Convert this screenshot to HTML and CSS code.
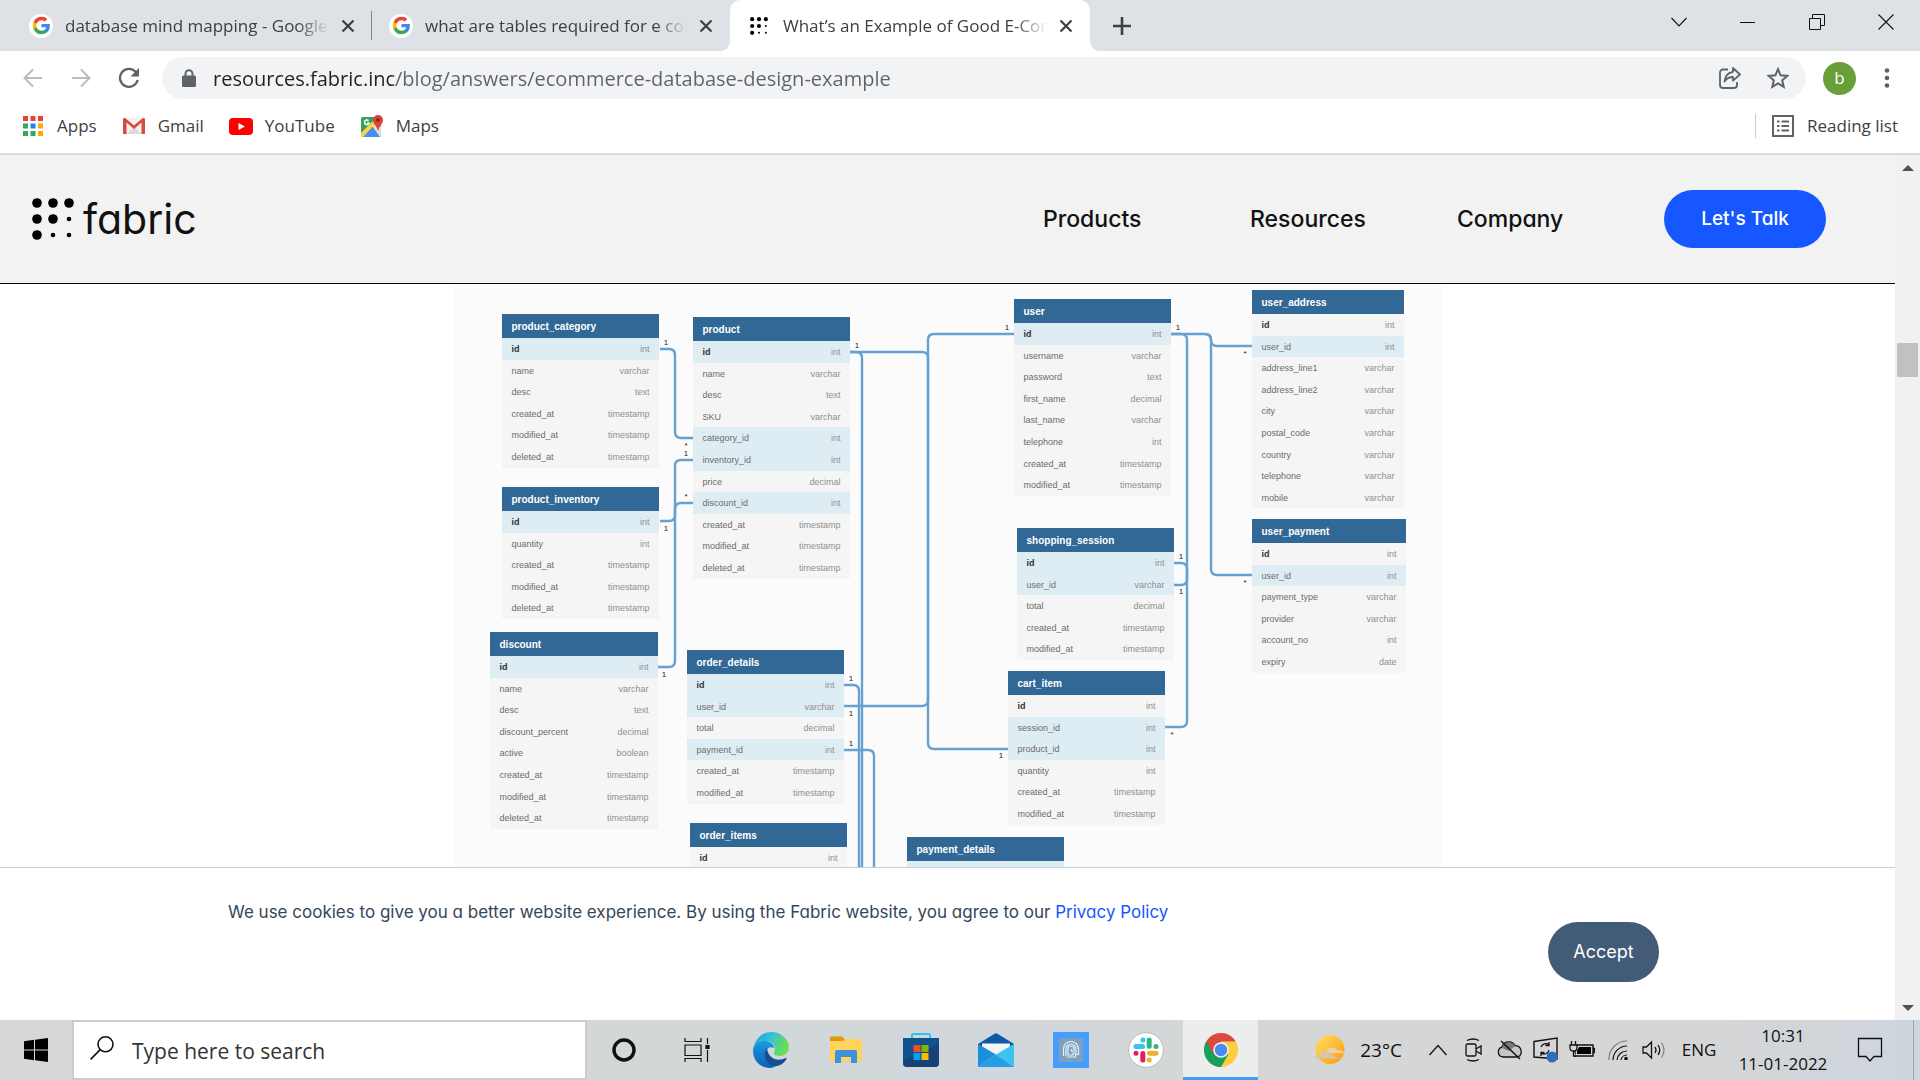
FILE: index.html
```html
<!DOCTYPE html>
<html lang="en">
<head>
<meta charset="utf-8">
<title>What's an Example of Good E-Commerce Database Design?</title>
<link rel="stylesheet" href="styles.css">
</head>
<body>
<svg class="defs" aria-hidden="true">
  <symbol id="google" viewBox="0 0 24 24">
    <path fill="#4285f4" d="M22.56 12.25c0-.78-.07-1.53-.2-2.25H12v4.26h5.92c-.26 1.37-1.04 2.53-2.21 3.31v2.77h3.57c2.08-1.92 3.28-4.74 3.28-8.09z"/>
    <path fill="#34a853" d="M12 23c2.97 0 5.46-.98 7.28-2.66l-3.57-2.77c-.98.66-2.23 1.06-3.71 1.06-2.86 0-5.29-1.93-6.16-4.53H2.18v2.84C3.99 20.53 7.7 23 12 23z"/>
    <path fill="#fbbc05" d="M5.84 14.09c-.22-.66-.35-1.36-.35-2.09s.13-1.43.35-2.09V7.07H2.18C1.43 8.55 1 10.22 1 12s.43 3.45 1.18 4.93l3.66-2.84z"/>
    <path fill="#ea4335" d="M12 5.38c1.62 0 3.06.56 4.21 1.64l3.15-3.15C17.45 2.09 14.97 1 12 1 7.7 1 3.99 3.47 2.18 7.07l3.66 2.84c.87-2.6 3.3-4.53 6.16-4.53z"/>
  </symbol>
  <symbol id="dots" viewBox="0 0 42 42">
    <circle cx="5" cy="5" r="4.8"/><circle cx="21" cy="5" r="4.8"/><circle cx="37" cy="5" r="4.8"/>
    <circle cx="5" cy="21" r="4.8"/><circle cx="21" cy="21" r="4.8"/><circle cx="37" cy="21" r="2.3"/>
    <circle cx="5" cy="37" r="4.8"/><circle cx="21" cy="37" r="2.3"/><circle cx="37" cy="37" r="2.3"/>
  </symbol>
  <symbol id="close" viewBox="0 0 14 14"><path d="M1.5 1.5l11 11M12.500 1.500l-11 11" fill="none" stroke="#3c4043" stroke-width="2.200"/></symbol>
</svg>

<header class="browser">
  <div class="tabstrip">
    <div class="tab tab-first">
      <span class="favicon"><svg width="19" height="19"><use href="#google"/></svg></span>
      <span class="tab-title">database mind mapping - Google Search</span>
      <button class="tab-close" aria-label="Close tab"><svg width="14" height="14"><use href="#close"/></svg></button>
    </div>
    <div class="tab">
      <span class="favicon"><svg width="19" height="19"><use href="#google"/></svg></span>
      <span class="tab-title">what are tables required for e commerce</span>
      <button class="tab-close" aria-label="Close tab"><svg width="14" height="14"><use href="#close"/></svg></button>
    </div>
    <div class="tab tab-active">
      <span class="favicon"><svg width="18" height="18"><use href="#dots"/></svg></span>
      <span class="tab-title">What’s an Example of Good E-Commerce</span>
      <button class="tab-close" aria-label="Close tab"><svg width="14" height="14"><use href="#close"/></svg></button>
    </div>
    <button class="new-tab" aria-label="New tab"><svg width="18" height="18" viewBox="0 0 18 18"><path d="M9 0v18M0 9h18" stroke="#3c4043" stroke-width="2.600"/></svg></button>
    <div class="window-buttons">
      <button aria-label="Search tabs"><svg width="16" height="16" viewBox="0 0 16 16"><path d="M.5 4L8 12l7.500-8" fill="none" stroke="#111" stroke-width="1.100"/></svg></button>
      <button aria-label="Minimize"><svg width="16" height="16" viewBox="0 0 16 16"><path d="M0 8.500h15" stroke="#111"/></svg></button>
      <button aria-label="Restore"><svg width="16" height="16" viewBox="0 0 16 16"><path d="M.5 4.500h11v11H.5zM3.500 4V.5h12v11H12" fill="none" stroke="#111"/></svg></button>
      <button aria-label="Close"><svg width="16" height="16" viewBox="0 0 16 16"><path d="M.5.5l15 15M15.500.5l-15 15" stroke="#111" stroke-width="1.100"/></svg></button>
    </div>
  </div>

  <div class="toolbar">
    <button class="nav-button" aria-label="Back"><svg width="20" height="20" viewBox="0 0 20 20"><path d="M19 10H2M10 1.500L1.500 10l8.500 8.500" fill="none" stroke="#babcbe" stroke-width="2"/></svg></button>
    <button class="nav-button" aria-label="Forward"><svg width="20" height="20" viewBox="0 0 20 20"><path d="M1 10h17M10 1.500l8.500 8.500-8.500 8.500" fill="none" stroke="#babcbe" stroke-width="2"/></svg></button>
    <button class="nav-button" aria-label="Reload"><svg width="22" height="22" viewBox="0 0 22 22"><path d="M18 5.200A9 9 0 1 0 19.700 13" fill="none" stroke="#5f6368" stroke-width="2.300"/><path d="M21 1v8.500h-8.500z" fill="#5f6368"/></svg></button>
    <div class="omnibox">
      <svg width="14" height="18" viewBox="0 0 14 18"><path d="M3.500 8V4.800a3.500 3.500 0 0 1 7 0V8" fill="none" stroke="#5f6368" stroke-width="2"/><rect x="0" y="6.500" width="14" height="11.500" rx="1.500" fill="#5f6368"/></svg>
      <input class="address" type="text" aria-label="Address" value="resources.fabric.inc/blog/answers/ecommerce-database-design-example">
      <button aria-label="Share"><svg width="22" height="22" viewBox="0 0 22 22" fill="none" stroke="#5f6368" stroke-width="1.800" stroke-linejoin="round"><path d="M9 2.500H4a3 3 0 0 0-3 3V18a3 3 0 0 0 3 3h11a3 3 0 0 0 3-3v-3"/><path d="M14 1l7 6.500-7 6.200V10c-4 0-6.500 1.200-8.500 4.500C6 9 8.500 5.500 14 4.800z"/></svg></button>
      <button aria-label="Bookmark this page"><svg width="22" height="22" viewBox="0 0 22 22"><path d="M11 2.200l2.600 6.100 6.600.6-5 4.400 1.500 6.500-5.700-3.500-5.700 3.500 1.500-6.500-5-4.400 6.600-.6z" fill="none" stroke="#5f6368" stroke-width="2"/></svg></button>
    </div>
    <button class="avatar" aria-label="Profile">b</button>
    <button class="menu-button" aria-label="Menu"><svg width="6" height="20" viewBox="0 0 6 20" fill="#5f6368"><circle cx="3" cy="2.500" r="2.300"/><circle cx="3" cy="10" r="2.300"/><circle cx="3" cy="17.500" r="2.300"/></svg></button>
  </div>

  <nav class="bookmarks" aria-label="Bookmarks">
    <a href="#"><svg width="20" height="20" viewBox="0 0 20 20"><path fill="#ea4335" d="M0 0h5v5H0zM7.500 0h5v5h-5zM15 0h5v5h-5z"/><path fill="#34a853" d="M0 7.500h5v5H0zM0 15h5v5H0zM7.500 15h5v5h-5z"/><path fill="#1a84f0" d="M7.500 7.500h5v5h-5z"/><path fill="#fbaa05" d="M15 7.500h5v5h-5zM15 15h5v5h-5z"/></svg>Apps</a>
    <a href="#"><svg width="24" height="24" viewBox="0 0 24 24"><path fill="#f2f2f2" d="M2 4h20v16H2z"/><path fill="#d8d8d8" d="M5 20l7-7 7 7z"/><path fill="#d54b3d" d="M1 5.500A1.500 1.500 0 0 1 3.500 4.300L12 11.500l8.500-7.200A1.500 1.500 0 0 1 23 5.500V20h-3.500V8.500L12 15 4.500 8.500V20H1z"/></svg>Gmail</a>
    <a href="#"><svg width="24" height="24" viewBox="0 0 24 24"><rect y="4" width="24" height="17" rx="4" fill="#f00"/><path fill="#fff" d="M9.500 9l6.500 3.500-6.500 3.500z"/></svg>YouTube</a>
    <a href="#"><svg width="24" height="24" viewBox="0 0 24 24"><rect x="1" y="3" width="20" height="20" rx="2" fill="#34a061"/><path fill="#4a8df6" d="M11 13l10 10H3z"/><path fill="#ddd" d="M12 12l4-4 5 5v9l-1 1z"/><path fill="#fdd34a" d="M1 19L17 3h4v1L3 23H1z"/><path fill="none" stroke="#fff" stroke-width="1.500" d="M8.500 6.800A2.300 2.300 0 1 0 9 9H7"/><path fill="#dc4437" d="M18 1a5 5 0 0 1 5 5c0 4-3.500 5-5 11-1.500-6-5-7-5-11a5 5 0 0 1 5-5z"/><circle cx="18" cy="6" r="1.800" fill="#801c16"/></svg>Maps</a>
    <a class="reading-list" href="#"><svg width="22" height="22" viewBox="0 0 22 22"><path fill="none" stroke="#5f6368" stroke-width="2" d="M1 1h20v20H1z"/><path stroke="#5f6368" stroke-width="2" d="M5 6.500h2.500M5 11h2.500M5 15.500h2.500M9.500 6.500H17M9.500 11H17M9.500 15.500H17"/></svg>Reading list</a>
  </nav>
</header>

<div class="viewport">
  <div class="page">
    <header class="site-header">
      <a class="logo" href="#"><svg width="42" height="42"><use href="#dots"/></svg><span>fabric</span></a>
      <nav class="site-nav">
        <a href="#">Products</a><a href="#">Resources</a><a href="#">Company</a>
        <button class="talk">Let's Talk</button>
      </nav>
    </header>

    <main class="article">
      <div class="diagram">
        <svg class="links" width="988" height="583" viewBox="454 284 988 583">
          <g fill="none" stroke="#66a1d2" stroke-width="2.400">
            <path d="M660 349h9q6 0 6 6v77q0 6 6 6h12"/>
            <path d="M660 521h9q6 0 6-6v-49q0-6 6-6h12"/>
            <path d="M658 667h11q6 0 6-6V509q0-6 6-6h12"/>
            <path d="M850 352h6q6 0 6 6v520"/>
            <path d="M850 352h72q6 0 6 6v385q0 6 6 6h74"/>
            <path d="M844 685h9q6 0 6 6v190"/>
            <path d="M844 706h78q6 0 6-6V340q0-6 6-6h80"/>
            <path d="M844 750h24q6 0 6 6v130"/>
            <path d="M1171 334h34q6 0 6 6q0 6 6 6h35"/>
            <path d="M1205 334q6 0 6 6v229q0 6 6 6h35"/>
            <path d="M1171 334h10q6 0 6 6v381q0 6-6 6h-16"/>
            <path d="M1174 563h7q6 0 6 6v10q0 6-6 6h-7"/>
          </g>
          <g class="marks">
            <text x="666" y="345">1</text><text x="686" y="448">*</text><text x="686" y="456">1</text><text x="686" y="499">*</text>
            <text x="666" y="531">1</text><text x="857" y="348">1</text><text x="1007" y="330">1</text><text x="1178" y="330">1</text>
            <text x="1245" y="356">*</text><text x="1181" y="559">1</text><text x="1181" y="594">1</text><text x="1245" y="585">*</text>
            <text x="664" y="677">1</text><text x="851" y="681">1</text><text x="851" y="716">1</text><text x="851" y="746">1</text>
            <text x="1001" y="758">1</text><text x="1172" y="737">*</text>
          </g>
        </svg>

        <table class="entity product-category">
          <thead><tr><th colspan="2">product_category</th></tr></thead>
          <tbody>
            <tr class="key"><th>id</th><td>int</td></tr>
            <tr><td>name</td><td>varchar</td></tr>
            <tr><td>desc</td><td>text</td></tr>
            <tr><td>created_at</td><td>timestamp</td></tr>
            <tr><td>modified_at</td><td>timestamp</td></tr>
            <tr><td>deleted_at</td><td>timestamp</td></tr>
          </tbody>
        </table>
        <table class="entity product">
          <thead><tr><th colspan="2">product</th></tr></thead>
          <tbody>
            <tr class="key"><th>id</th><td>int</td></tr>
            <tr><td>name</td><td>varchar</td></tr>
            <tr><td>desc</td><td>text</td></tr>
            <tr><td>SKU</td><td>varchar</td></tr>
            <tr class="key"><td>category_id</td><td>int</td></tr>
            <tr class="key"><td>inventory_id</td><td>int</td></tr>
            <tr><td>price</td><td>decimal</td></tr>
            <tr class="key"><td>discount_id</td><td>int</td></tr>
            <tr><td>created_at</td><td>timestamp</td></tr>
            <tr><td>modified_at</td><td>timestamp</td></tr>
            <tr><td>deleted_at</td><td>timestamp</td></tr>
          </tbody>
        </table>
        <table class="entity product-inventory">
          <thead><tr><th colspan="2">product_inventory</th></tr></thead>
          <tbody>
            <tr class="key"><th>id</th><td>int</td></tr>
            <tr><td>quantity</td><td>int</td></tr>
            <tr><td>created_at</td><td>timestamp</td></tr>
            <tr><td>modified_at</td><td>timestamp</td></tr>
            <tr><td>deleted_at</td><td>timestamp</td></tr>
          </tbody>
        </table>
        <table class="entity discount">
          <thead><tr><th colspan="2">discount</th></tr></thead>
          <tbody>
            <tr class="key"><th>id</th><td>int</td></tr>
            <tr><td>name</td><td>varchar</td></tr>
            <tr><td>desc</td><td>text</td></tr>
            <tr><td>discount_percent</td><td>decimal</td></tr>
            <tr><td>active</td><td>boolean</td></tr>
            <tr><td>created_at</td><td>timestamp</td></tr>
            <tr><td>modified_at</td><td>timestamp</td></tr>
            <tr><td>deleted_at</td><td>timestamp</td></tr>
          </tbody>
        </table>
        <table class="entity order-details">
          <thead><tr><th colspan="2">order_details</th></tr></thead>
          <tbody>
            <tr class="key"><th>id</th><td>int</td></tr>
            <tr class="key"><td>user_id</td><td>varchar</td></tr>
            <tr><td>total</td><td>decimal</td></tr>
            <tr class="key"><td>payment_id</td><td>int</td></tr>
            <tr><td>created_at</td><td>timestamp</td></tr>
            <tr><td>modified_at</td><td>timestamp</td></tr>
          </tbody>
        </table>
        <table class="entity order-items">
          <thead><tr><th colspan="2">order_items</th></tr></thead>
          <tbody>
            <tr><th>id</th><td>int</td></tr>
          </tbody>
        </table>
        <table class="entity payment-details">
          <thead><tr><th colspan="2">payment_details</th></tr></thead>
          <tbody>
            <tr class="key"><th></th><td></td></tr>
          </tbody>
        </table>
        <table class="entity user">
          <thead><tr><th colspan="2">user</th></tr></thead>
          <tbody>
            <tr class="key"><th>id</th><td>int</td></tr>
            <tr><td>username</td><td>varchar</td></tr>
            <tr><td>password</td><td>text</td></tr>
            <tr><td>first_name</td><td>decimal</td></tr>
            <tr><td>last_name</td><td>varchar</td></tr>
            <tr><td>telephone</td><td>int</td></tr>
            <tr><td>created_at</td><td>timestamp</td></tr>
            <tr><td>modified_at</td><td>timestamp</td></tr>
          </tbody>
        </table>
        <table class="entity user-address">
          <thead><tr><th colspan="2">user_address</th></tr></thead>
          <tbody>
            <tr><th>id</th><td>int</td></tr>
            <tr class="key"><td>user_id</td><td>int</td></tr>
            <tr><td>address_line1</td><td>varchar</td></tr>
            <tr><td>address_line2</td><td>varchar</td></tr>
            <tr><td>city</td><td>varchar</td></tr>
            <tr><td>postal_code</td><td>varchar</td></tr>
            <tr><td>country</td><td>varchar</td></tr>
            <tr><td>telephone</td><td>varchar</td></tr>
            <tr><td>mobile</td><td>varchar</td></tr>
          </tbody>
        </table>
        <table class="entity shopping-session">
          <thead><tr><th colspan="2">shopping_session</th></tr></thead>
          <tbody>
            <tr class="key"><th>id</th><td>int</td></tr>
            <tr class="key"><td>user_id</td><td>varchar</td></tr>
            <tr><td>total</td><td>decimal</td></tr>
            <tr><td>created_at</td><td>timestamp</td></tr>
            <tr><td>modified_at</td><td>timestamp</td></tr>
          </tbody>
        </table>
        <table class="entity user-payment">
          <thead><tr><th colspan="2">user_payment</th></tr></thead>
          <tbody>
            <tr><th>id</th><td>int</td></tr>
            <tr class="key"><td>user_id</td><td>int</td></tr>
            <tr><td>payment_type</td><td>varchar</td></tr>
            <tr><td>provider</td><td>varchar</td></tr>
            <tr><td>account_no</td><td>int</td></tr>
            <tr><td>expiry</td><td>date</td></tr>
          </tbody>
        </table>
        <table class="entity cart-item">
          <thead><tr><th colspan="2">cart_item</th></tr></thead>
          <tbody>
            <tr><th>id</th><td>int</td></tr>
            <tr class="key"><td>session_id</td><td>int</td></tr>
            <tr class="key"><td>product_id</td><td>int</td></tr>
            <tr><td>quantity</td><td>int</td></tr>
            <tr><td>created_at</td><td>timestamp</td></tr>
            <tr><td>modified_at</td><td>timestamp</td></tr>
          </tbody>
        </table>
      </div>
    </main>

    <section class="cookies" aria-label="Cookie notice">
      <p>We use cookies to give you a better website experience. By using the Fabric website, you agree to our <a href="#">Privacy Policy</a></p>
      <button class="accept">Accept</button>
    </section>
  </div>

  <div class="scrollbar" aria-hidden="true">
    <svg width="12" height="6" viewBox="0 0 12 6"><path d="M6 0l6 6H0z" fill="#505050"/></svg>
    <div class="track"><div class="thumb"></div></div>
    <svg width="12" height="6" viewBox="0 0 12 6"><path d="M0 0h12L6 6z" fill="#505050"/></svg>
  </div>
</div>

<footer class="taskbar">
  <button class="start" aria-label="Start"><svg width="24" height="24" viewBox="0 0 24 24"><path d="M0 3.200l10-1.400v9.700H0zM11 1.700L24 0v11.500H11zM0 12.500h10v9.700L0 20.800zM11 12.500h13V24l-13-1.700z"/></svg></button>
  <label class="search">
    <svg width="24" height="24" viewBox="0 0 24 24" fill="none" stroke="#111" stroke-width="1.600"><circle cx="15.500" cy="8.300" r="7.500"/><path d="M10.200 13.600L.6 23.400"/></svg>
    <input type="text" placeholder="Type here to search" aria-label="Type here to search">
  </label>
  <div class="apps">
    <button class="system" aria-label="Cortana"><svg width="24" height="24" viewBox="0 0 24 24"><circle cx="12" cy="12" r="10" fill="none" stroke="#111" stroke-width="3.400"/></svg></button>
    <button class="system" aria-label="Task view"><svg width="26" height="24" viewBox="0 0 26 24" fill="none" stroke="#111" stroke-width="1.200"><path d="M1 0v3.500h16V0M1 7h16v10.500H1zM1 24v-3.500h16V24M23.500 0v6M23.500 12v12"/><path d="M22 7.500h3v3h-3z" fill="#111"/></svg></button>
    <button aria-label="Microsoft Edge"><svg width="36" height="36" viewBox="0 0 36 36">
      <defs><linearGradient id="e1" x1="0" y1="0" x2="1" y2=".4"><stop offset="0" stop-color="#1b9de2"/><stop offset=".5" stop-color="#35c1d8"/><stop offset="1" stop-color="#6adf52"/></linearGradient><linearGradient id="e2" x1="0" y1="0" x2="0" y2="1"><stop offset="0" stop-color="#1c9bde"/><stop offset="1" stop-color="#0b5fb8"/></linearGradient></defs>
      <path fill="url(#e2)" d="M0 19C0 10 8 8 13 9c5 0 8 4 8 7-6-3-9 3-8 8 1 6 6 9 12 9-3 2-6 3-8 3C7 36 0 28 0 19z"/>
      <path fill="url(#e1)" d="M.5 17C2 7 9 0 18 0c11 0 18 8 18 15 0 6-5 9-9 9-5 0-7-1.500-6-3 2-3 1-12-8-12C7 9 2 12 .5 17z"/>
      <path fill="#134f94" d="M14 16c-6 9 1 18 9 18 5 0 9-4 10.500-7.200.3-.8-.4-1.200-1-.8C25 30 15 27 14 16z"/></svg></button>
    <button aria-label="File Explorer"><svg width="32" height="28" viewBox="0 0 32 28"><path fill="#e09c06" d="M0 2a1.500 1.500 0 0 1 1.500-1.500H12L15 4v5H0z"/><path fill="#ffd35c" d="M0 5h13l3-2h14a2 2 0 0 1 2 2v19a1.500 1.500 0 0 1-1.500 1.500h-29A1.500 1.500 0 0 1 0 24z"/><path fill="#3a93dc" d="M5 27V16a2 2 0 0 1 2-2h18a2 2 0 0 1 2 2v11h-6v-6H11v6z"/></svg></button>
    <button aria-label="Microsoft Store"><svg width="36" height="36" viewBox="0 0 36 36"><path fill="none" stroke="#27c3f5" stroke-width="2" d="M9 7V3a1 1 0 0 1 1-1h16a1 1 0 0 1 1 1v4"/><path fill="#13508e" d="M0 6h36v25a4 4 0 0 1-4 4H4a4 4 0 0 1-4-4z"/><path fill="#1c3868" d="M0 29L36 12v19a4 4 0 0 1-4 4H4a4 4 0 0 1-4-4z" opacity=".6"/><path fill="#f25022" d="M10.500 13h7v7h-7z"/><path fill="#7fba00" d="M18.500 13h7v7h-7z"/><path fill="#00a4ef" d="M10.500 21h7v7h-7z"/><path fill="#ffb900" d="M18.500 21h7v7h-7z"/></svg></button>
    <button aria-label="Mail"><svg width="36" height="34" viewBox="0 0 36 34"><path fill="#0c59a4" d="M0 11L16.500.8a3 3 0 0 1 3 0L36 11v4H0z"/><path fill="#f4f4f4" d="M4 10.500h28V16L18 25 4 16z"/><path fill="#1a8fdc" d="M0 11l18 10.500L0 34z"/><path fill="#3cc3f4" d="M36 11L18 21.500 36 34z"/><path fill="#259fe4" d="M0 34l18-12.500L36 34z"/></svg></button>
    <button aria-label="Print tool"><svg width="36" height="36" viewBox="0 0 36 36"><path fill="#459dfc" d="M0 0h36v36H0z"/><path fill="#7f9fbe" d="M6 6h24v24H6z"/><g fill="none" stroke="#e8f1fa" stroke-width="1.200"><path d="M10.500 24V17a7.500 7.500 0 0 1 15 0v5.500h-3V25h-8"/><path d="M13 24.500V17a5 5 0 0 1 10 0v4h-3v2h-5v-6a3 3 0 0 1 6 0v2h-2.500v-2"/></g></svg></button>
    <button aria-label="Slack"><svg width="36" height="36" viewBox="0 0 36 36"><circle cx="18" cy="18" r="17.400" fill="#fff" stroke="#b9b9b9"/><g stroke-width="5" stroke-linecap="round" fill="none"><path stroke="#36c5f0" d="M15 8v0M8 14.500h6.500"/><path stroke="#2eb67d" d="M21.200 8v6.300M28 14.500v0"/><path stroke="#ecb22e" d="M21.500 21.300H28M21.200 28v0"/><path stroke="#e01e5a" d="M14.800 21.500V28M8 21.300v0"/></g></svg></button>
    <button class="running" aria-label="Google Chrome"><svg width="34" height="34" viewBox="0 0 34 34"><circle cx="17" cy="17" r="17" fill="#ffcd41"/><path fill="#16a05d" d="M17 17L2.300 8.500A17 17 0 0 0 17 34l7.400-12.700z"/><path fill="#db4a3e" d="M2.300 8.500a17 17 0 0 1 29.400 0H17v8.500l-7.400 4.200z"/><circle cx="17" cy="17" r="7.700" fill="#f4f4f4"/><circle cx="17" cy="17" r="6.200" fill="#4a8af4"/></svg></button>
  </div>
  <button class="weather"><svg width="36" height="30" viewBox="0 0 36 30"><defs><linearGradient id="sun" x1="0" y1="0" x2="1" y2="1"><stop offset="0" stop-color="#ffe066"/><stop offset="1" stop-color="#ff9a0a"/></linearGradient></defs><circle cx="18" cy="14.500" r="14.500" fill="url(#sun)"/><path d="M14 16a6 4.500 0 0 1 11-1q4 0 8 3H12z" fill="#e8d2b0"/><path d="M1 23l6-2a6 4.500 0 0 1 12-1q4 0 6 2.500l8 1z" fill="#d8c4aa"/></svg>23°C</button>
  <div class="tray">
    <button aria-label="Show hidden icons"><svg width="18" height="12" viewBox="0 0 18 12"><path d="M.5 11L9 1.500l8.500 9.500" fill="none" stroke="#111" stroke-width="1.300"/></svg></button>
    <button aria-label="Meet now"><svg width="18" height="24" viewBox="0 0 18 24" fill="none" stroke="#111" stroke-width="1.300"><rect x="1" y="6" width="10" height="12" rx="1.500"/><path d="M11 11l5-3v8l-5-3M2 2.500q6-3 12 0M2 21.500q6 3 12 0"/></svg></button>
    <button aria-label="OneDrive"><svg width="26" height="20" viewBox="0 0 26 20"><path d="M6 17a5 5 0 0 1-1-9.800 7 7 0 0 1 13-1.500A6 6 0 0 1 21 17z" fill="#c6c6c6" stroke="#111" stroke-width="1.300"/><path d="M5 8a7 7 0 0 1 13-2l-6 5z" fill="#777"/><path d="M4 1l19 18" stroke="#111" stroke-width="1.500"/></svg></button>
    <button aria-label="Update"><svg width="26" height="26" viewBox="0 0 26 26"><path d="M1 4.500L24 1v21L1 20z" fill="none" stroke="#111" stroke-width="1.400"/><path d="M8 10a5 5 0 0 1 8-2M16 5v3.500h-3.500M16 13a5 5 0 0 1-8 3M8 19v-3.500h3.500" fill="none" stroke="#111" stroke-width="1.300"/><circle cx="19" cy="20" r="5.500" fill="#2b70b8"/></svg></button>
    <button aria-label="Battery charging"><svg width="26" height="18" viewBox="0 0 26 18"><path d="M6 4h18v11H6zM24 7.500h1.500v4H24" fill="none" stroke="#111" stroke-width="1.400"/><path d="M10 6h12v7H8v-3z"/><path d="M1 4h7v3q0 3-3.500 3T1 7zM2.500 0v4M6.500 0v4M4.500 10v5H7" fill="#d5d6d6" stroke="#111" stroke-width="1.300"/></svg></button>
    <button aria-label="Network"><svg width="20" height="20" viewBox="0 0 20 20" fill="none" stroke="#111" stroke-width="1.200"><path d="M1 20A18 18 0 0 1 19 1" stroke="#777"/><path d="M5 20A14 14 0 0 1 19 6M9 20a10 10 0 0 1 10-9M13 20a6 6 0 0 1 6-5"/><circle cx="18" cy="18.500" r="1.200" fill="#111"/></svg></button>
    <button aria-label="Volume"><svg width="24" height="20" viewBox="0 0 24 20" fill="none" stroke="#111" stroke-width="1.300"><path d="M1 7h3.500L9.500 2v16l-5-5H1zM13 7q2 3 0 6M16 5q3.500 5 0 10"/><path d="M19.500 2.500q5 7.500 0 15" stroke="#888"/></svg></button>
    <button class="language">ENG</button>
    <button class="clock"><span>10:31</span><span>11-01-2022</span></button>
    <button class="notifications" aria-label="Notifications"><svg width="26" height="26" viewBox="0 0 26 26"><path d="M1.500 1.500h23v18H17L13 24l-4-4.500H1.500z" fill="none" stroke="#111" stroke-width="1.300"/></svg></button>
    <button class="show-desktop" aria-label="Show desktop"></button>
  </div>
</footer>
</body>
</html>
```
FILE: styles.css
```css
* { box-sizing: border-box; }

body {
  margin: 0;
  height: 100vh;
  display: flex;
  flex-direction: column;
  overflow: hidden;
  background: #fff;
  color: #3c4043;
  font: 17px/24px "Open Sans", "Noto Sans", sans-serif;
}

button {
  display: flex;
  align-items: center;
  justify-content: center;
  padding: 0;
  border: 0;
  background: none;
  color: inherit;
  font: inherit;
}

input { border: 0; padding: 0; outline: 0; background: none; font: inherit; }
a { color: inherit; text-decoration: none; }
svg { flex: none; display: block; }
.defs { position: absolute; width: 0; height: 0; }

/* Tab strip */
.tabstrip { display: flex; height: 51px; padding-left: 12px; background: #dee1e6; }
.tab { display: flex; align-items: center; width: 358px; padding: 0 17px; }
.tab-first {
  width: 360px;
  background: linear-gradient(#85888c, #85888c) right center / 1px 29px no-repeat;
}
.tab-active {
  position: relative;
  width: 360px;
  background: #fff;
  border-radius: 10px 10px 0 0;
}
.tab-active::before,
.tab-active::after {
  content: "";
  position: absolute;
  bottom: 0;
  width: 10px;
  height: 10px;
}
.tab-active::before { left: -10px; background: radial-gradient(circle at 0 0, transparent 10px, #fff 10px); }
.tab-active::after { right: -10px; background: radial-gradient(circle at 100% 0, transparent 10px, #fff 10px); }
.favicon {
  display: grid;
  place-items: center;
  width: 24px;
  height: 24px;
  border-radius: 50%;
  background: #fff;
}
.tab-title {
  flex: 1;
  margin: 0 12px;
  overflow: hidden;
  white-space: nowrap;
  -webkit-mask-image: linear-gradient(to left, transparent, #000 32px);
  mask-image: linear-gradient(to left, transparent, #000 32px);
}
.new-tab { width: 64px; }
.window-buttons { display: flex; margin-left: auto; height: 43px; }
.window-buttons button { width: 69px; }

/* Toolbar */
.toolbar { display: flex; align-items: center; height: 54px; padding: 0 15px 0 9px; }
.nav-button { width: 48px; height: 42px; }
.omnibox {
  flex: 1;
  display: flex;
  align-items: center;
  height: 42px;
  margin-left: 9px;
  padding: 0 4px 0 20px;
  border-radius: 21px;
  background: #f1f3f4;
}
.address {
  flex: 1;
  height: 42px;
  margin-left: 17px;
  font-size: 20px;
  color: transparent;
  background: linear-gradient(to right, #202124 182px, #5f6368 182px);
  -webkit-background-clip: text;
  background-clip: text;
}
.omnibox button { width: 48px; height: 42px; }
.avatar {
  width: 33px;
  height: 33px;
  margin-left: 17px;
  border-radius: 50%;
  background: #689f38;
  color: #fff;
}
.menu-button { width: 36px; height: 42px; margin-left: 13px; }

/* Bookmarks */
.bookmarks {
  display: flex;
  align-items: center;
  gap: 25px;
  height: 50px;
  padding: 0 22px 6px 23px;
  border-bottom: 2px solid #dadada;
}
.bookmarks a { display: flex; align-items: center; gap: 12px; }
.bookmarks a:first-child { gap: 14px; }
.bookmarks .reading-list {
  margin-left: auto;
  padding-left: 16px;
  border-left: 1px solid #c8cacc;
  gap: 13px;
}

/* Page viewport */
.viewport { flex: 1; min-height: 0; display: flex; }
.page {
  flex: 1;
  display: flex;
  flex-direction: column;
  font-family: Inter, "Open Sans", sans-serif;
  font-feature-settings: "cv11";
}
.site-header {
  flex: none;
  display: flex;
  align-items: center;
  justify-content: space-between;
  height: 129px;
  padding: 0 69px 0 32px;
  border-bottom: 1px solid #000;
  background: #f2f2f2;
  color: #111;
}
.logo { display: flex; align-items: center; gap: 9px; font-size: 41px; line-height: 42px; }
.site-nav { display: flex; align-items: center; font-size: 23px; font-weight: 500; }
.site-nav a { width: 207px; }
.talk {
  width: 162px;
  height: 58px;
  border-radius: 29px;
  background: #1657ff;
  color: #fff;
  font-size: 19px;
}

/* Diagram */
.article { flex: 1; min-height: 0; overflow: hidden; }
.diagram {
  position: relative;
  width: 988px;
  height: 900px;
  margin: 0 auto;
  background: #fbfbfb;
  font-family: "Liberation Sans", Arial, sans-serif;
}
.links { position: absolute; left: 0; top: 0; }
.marks text { font-size: 8px; fill: #222; text-anchor: middle; }
.entity {
  position: absolute;
  width: 157px;
  border-collapse: collapse;
  background: #f5f5f5;
  color: #6c6c6c;
  font-size: 9px;
  line-height: 12px;
}
.entity tr { height: 22px; }
.entity tbody tr:nth-child(5n+2),
.entity tbody tr:nth-child(5n+4) { height: 21px; }
.entity th,
.entity td { padding: 0 10px; text-align: left; }
.entity td:last-child { padding-right: 9px; text-align: right; color: #909090; }
.entity tbody th { color: #333; }
.entity .key { background: #deecf4; }
.entity thead tr { height: 24px; background: #316896; color: #fff; font-size: 10px; }
.entity thead th { padding-top: 2px; }
.product-category { left: 48px; top: 30px; }
.product { left: 239px; top: 33px; }
.product-inventory { left: 48px; top: 203px; }
.discount { left: 36px; top: 348px; width: 168px; }
.order-details { left: 233px; top: 366px; }
.order-items { left: 236px; top: 539px; }
.payment-details { left: 453px; top: 553px; }
.user { left: 560px; top: 15px; }
.user-address { left: 798px; top: 6px; width: 152px; }
.shopping-session { left: 563px; top: 244px; }
.user-payment { left: 798px; top: 235px; width: 154px; }
.cart-item { left: 554px; top: 387px; }

/* Cookie notice */
.cookies {
  flex: none;
  display: flex;
  justify-content: space-between;
  align-items: flex-start;
  height: 153px;
  padding: 32px 236px 0 228px;
  border-top: 1px solid #c3d0dc;
  background: #fff;
  color: #33475b;
}
.cookies p { margin: 0; }
.cookies a { color: #1657ff; }
.accept {
  width: 111px;
  height: 60px;
  margin-top: 22px;
  border-radius: 30px;
  background: #425b76;
  color: #fff;
  font-size: 18px;
}

/* Scrollbar */
.scrollbar {
  display: flex;
  flex-direction: column;
  align-items: center;
  width: 25px;
  padding: 10px 0 9px;
  background: #f1f1f1;
}
.track { flex: 1; width: 21px; padding-top: 172px; }
.thumb { height: 34px; background: #c1c1c1; }

/* Taskbar */
.taskbar {
  flex: none;
  display: flex;
  height: 60px;
  background: linear-gradient(to right, #d5d7d9, #d3d7d7 35%, #d1d7dc 52%, #d5d6d6 65%, #d6d6d6 88%, #cdd5dd);
  color: #111;
}
.start { width: 72px; }
.search {
  display: flex;
  align-items: center;
  gap: 18px;
  width: 515px;
  padding: 0 16px;
  border: 2px solid #ccc;
  background: #fff;
}
.search svg { margin-bottom: 4px; }
.search input { flex: 1; height: 56px; padding-top: 2px; font-size: 21px; }
.search input::placeholder { color: #333; opacity: 1; }
.apps { display: flex; }
.apps button { width: 75px; }
.apps .system { width: 73px; }
.apps .running { background: #eceeee; border-bottom: 3px solid #429cf5; border-top: 3px solid #eceeee; }
.weather { gap: 12px; margin-left: auto; margin-right: 18px; font-size: 19px; }
.tray { display: flex; font-size: 17px; }
.tray button { width: 36px; }
.tray .language { width: 54px; }
.tray .clock { width: 114px; flex-direction: column; gap: 4px; }
.tray .notifications { width: 60px; margin-right: 13px; }
.tray .show-desktop { width: 7px; border-left: 1px solid #9fa4a9; }
```
